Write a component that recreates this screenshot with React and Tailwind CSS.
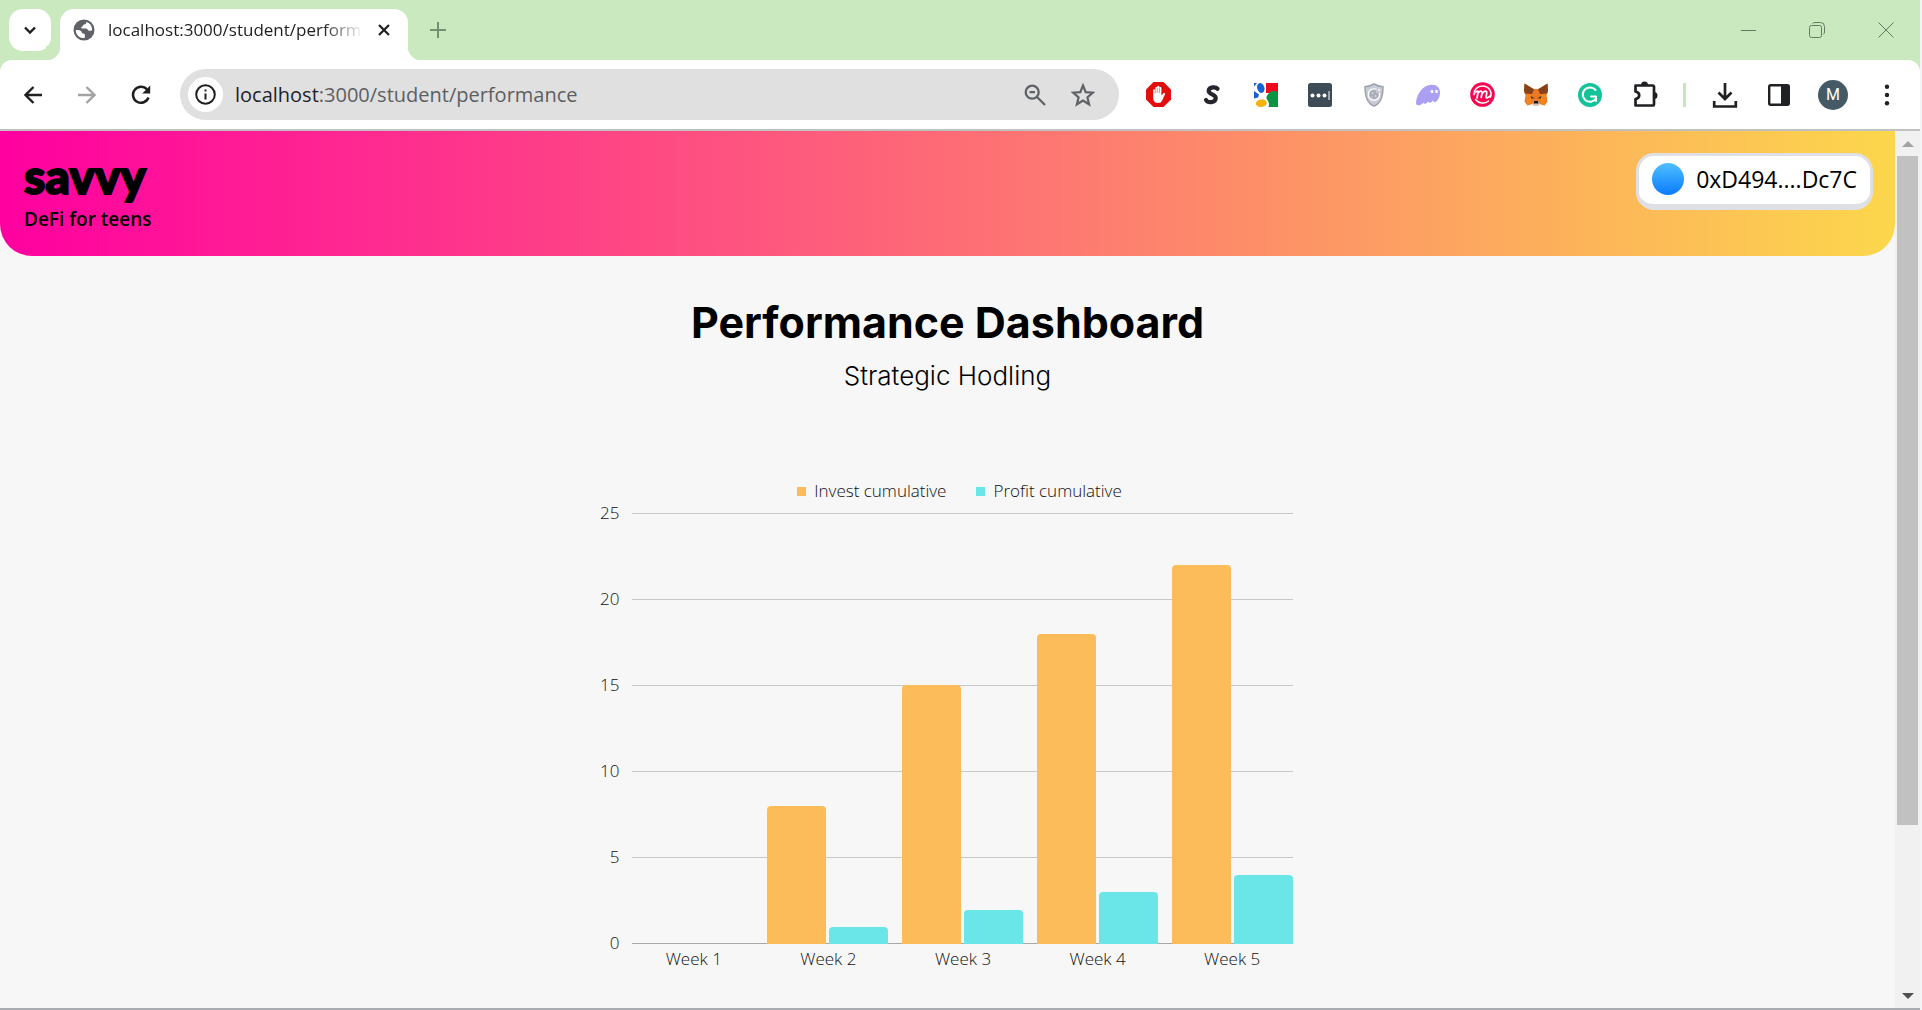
import React from "react";

const weeks = [
  { label: "Week 1", invest: 0, profit: 0 },
  { label: "Week 2", invest: 8, profit: 1 },
  { label: "Week 3", invest: 15, profit: 2 },
  { label: "Week 4", invest: 18, profit: 3 },
  { label: "Week 5", invest: 22, profit: 4 },
];
const MAX = 25;
const ticks = [25, 20, 15, 10, 5, 0];

function Svg({ size = 24, box = 24, children, className = "" }) {
  return (
    <svg width={size} height={size} viewBox={`0 0 ${box} ${box}`} fill="none" className={className} aria-hidden="true">
      {children}
    </svg>
  );
}

function ToolButton({ label, children }) {
  return (
    <button type="button" aria-label={label} className="flex h-10 w-[54px] shrink-0 items-center justify-center">
      {children}
    </button>
  );
}

function TabStrip() {
  return (
    <div className="flex h-[60px] items-end bg-[#cae9be]">
      <div className="flex h-[51px] shrink-0 items-start pl-[9px]">
        <button type="button" aria-label="Search tabs" className="flex size-[42px] items-center justify-center rounded-[14px] bg-white">
          <Svg size={14} box={14}>
            <path d="M2 4.5l5 5 5-5" stroke="#1f1f1f" strokeWidth="2.4" />
          </Svg>
        </button>
      </div>
      <div className="relative ml-[9px] flex h-[51px] w-[348px] shrink-0 items-center rounded-t-[14px] bg-white pb-[9px] pl-[13px] pr-2">
        <div className="absolute -left-[14px] bottom-0 size-[14px] bg-[radial-gradient(circle_at_0_0,#cae9be_14px,#ffffff_15px)]" />
        <div className="absolute -right-[14px] bottom-0 size-[14px] bg-[radial-gradient(circle_at_100%_0,#cae9be_14px,#ffffff_15px)]" />
        <Svg size={22} box={22} className="shrink-0">
          <circle cx="11" cy="11" r="10.5" fill="#5f6368" />
          <path d="M2.8 11c2.6.1 4.2.2 5.4 1.2 1 .9.5 2.1 1.900 2.200 1.300.1 1.900.5 1.800 1.700l-.2 2.900C6.800 19.600 2.700 15.900 2.800 11z" fill="#fff" />
          <path d="M13.200 3c.3 1.500-.6 2.400-2 2.500-1.500.1-.9 1.900-2.300 2.200-1.200.3-.9 1.700.3 1.700h3.900c1.500 0 1.500 2.200 3 2.400 1 .1 1.900.1 2.900-.3C19.500 7 16.700 3.800 13.200 3z" fill="#fff" />
        </Svg>
        <span className="ml-[13px] min-w-0 flex-1 whitespace-nowrap text-[17px] leading-6 text-[#1f1f1f] [mask-image:linear-gradient(to_right,#000_215px,transparent_255px)]">
          localhost:3000/student/perform
        </span>
        <button type="button" aria-label="Close tab" className="flex size-8 shrink-0 items-center justify-center">
          <Svg size={14} box={14}>
            <path d="M2 2l10 10M12 2L2 12" stroke="#1f1f1f" strokeWidth="2.2" />
          </Svg>
        </button>
      </div>
      <button type="button" aria-label="New tab" className="mb-[9px] ml-[9px] flex size-[42px] shrink-0 items-center justify-center">
        <Svg size={16} box={16}>
          <path d="M8 0v16M0 8h16" stroke="#759070" strokeWidth="2" />
        </Svg>
      </button>
      <div className="ml-auto flex h-full shrink-0">
        <button type="button" aria-label="Minimize" className="flex w-[69px] items-center justify-center">
          <Svg size={16} box={16}>
            <path d="M0 8.500h15" stroke="#667a60" />
          </Svg>
        </button>
        <button type="button" aria-label="Restore" className="flex w-[68px] items-center justify-center">
          <Svg size={16} box={16}>
            <rect x=".5" y="3.500" width="12" height="12" rx="2" stroke="#667a60" />
            <path d="M3.500 1.500Q4.500.5 6 .5h5.500a4 4 0 0 1 4 4V10q0 1.500-1.500 2.500" stroke="#667a60" />
          </Svg>
        </button>
        <button type="button" aria-label="Close window" className="flex w-[69px] items-center justify-center">
          <Svg size={16} box={16}>
            <path d="M.5.5l15 15M15.500.5l-15 15" stroke="#667a60" />
          </Svg>
        </button>
      </div>
    </div>
  );
}

function Extensions() {
  return (
    <>
      <ToolButton label="AdBlock">
        <Svg size={25} box={25}>
          <path d="M7.500 0h10L25 7.500v10L17.500 25h-10L0 17.500v-10z" fill="#e40d0d" />
          <path d="M7.200 12.500V8.200a1 1 0 0 1 2 0V6a1 1 0 0 1 2 0V4.800a1.100 1.100 0 0 1 2.200 0V6a1 1 0 0 1 2 0v7.500l1.800-2c.8-.9 2.200-.3 1.700.9l-2.700 6.100c-.8 1.700-2 2.500-4 2.500-3.200 0-5-1.800-5-4.700z" fill="#fff" />
          <path d="M9.200 7.500v4M11.200 6v5M13.400 6v5" stroke="#e40d0d" strokeWidth=".5" />
        </Svg>
      </ToolButton>
      <ToolButton label="Scribe">
        <Svg size={22} box={22}>
          <path d="M16.500 4.800C15 2.700 8.300 2.400 7.700 6.500c-.6 4.300 7.700 3.300 7 8-.6 4.200-7.500 5-9.700 1.500" stroke="#25262d" strokeWidth="4.200" strokeLinecap="round" />
        </Svg>
      </ToolButton>
      <ToolButton label="Google Search">
        <Svg size={24} box={24}>
          <path d="M12 0h12v10H12z" fill="#ee0a1c" />
          <path d="M0 0h3L0 3.500z" fill="#1a5fd0" />
          <path d="M0 8l5 3.500L4 14.500l-4 1z" fill="#1a5fd0" />
          <ellipse cx="6.800" cy="5" rx="3.600" ry="5" transform="rotate(-18 6.800 5)" fill="#1365d6" />
          <path d="M24 9.500V24h-9.500c1-3 .5-5-1.500-7.500-1.500-2 0-4 2-6.500C18 7 22 7.500 24 9.500z" fill="#0a9444" />
          <ellipse cx="7.300" cy="20.200" rx="5.500" ry="3.800" transform="rotate(-6 7.300 20.200)" fill="#f4b40c" />
        </Svg>
      </ToolButton>
      <ToolButton label="Password manager">
        <Svg size={24} box={24}>
          <rect width="24" height="24" rx="2.500" fill="#3d4c56" />
          <circle cx="4.500" cy="12.500" r="2" fill="#fff" />
          <circle cx="10.500" cy="12.500" r="2" fill="#fff" />
          <circle cx="16.500" cy="12.500" r="2" fill="#fff" />
          <path d="M21 8v9" stroke="#fff" />
        </Svg>
      </ToolButton>
      <ToolButton label="Privacy shield">
        <Svg size={24} box={24}>
          <path d="M12 .8c3 2 5.500 2.600 9 2.800 0 9-1.500 16-9 19.600C4.500 19.600 3 12.600 3 3.600 6.500 3.400 9 2.800 12 .8z" fill="#c8ccd5" stroke="#9a9fab" strokeWidth="1.400" />
          <circle cx="12" cy="11.500" r="5.600" fill="#a9aebb" stroke="#fff" strokeWidth="1.400" />
          <circle cx="10.500" cy="10" r=".8" fill="#e8eaf0" />
          <circle cx="13.500" cy="13" r=".8" fill="#e8eaf0" />
          <circle cx="10" cy="14" r=".6" fill="#e8eaf0" />
          <circle cx="16" cy="8" r="2.200" fill="#c8ccd5" />
          <circle cx="17" cy="7" r="1" fill="#fff" />
        </Svg>
      </ToolButton>
      <ToolButton label="Phantom">
        <Svg size={26} box={26}>
          <path d="M1 21c0-6 5-17.500 15-18.300 6-.4 9 3 9 7.800 0 4-2 8-4 9.300-1.500.9-2.600 0-2.900-1.500-1.400 2.300-3.700 3.500-4.900 1.300-2.300 3-4.400 2.600-5 .8C6.600 23.600 1 24.600 1 21z" fill="#ab9ff2" />
          <ellipse cx="17" cy="9.500" rx="1.400" ry="1.800" fill="#fff" />
          <ellipse cx="21.500" cy="9.500" rx="1.400" ry="1.800" fill="#fff" />
        </Svg>
      </ToolButton>
      <ToolButton label="Mintme">
        <Svg size={25} box={25}>
          <circle cx="12.500" cy="12.500" r="12.300" fill="#f8064f" />
          <path d="M20.500 15c2-5.500-2-11-8-11-5 0-9 4-8.500 8.700M5.500 17.500c3 4 9 4.800 13 1.500" stroke="#fff" strokeWidth="1.500" strokeLinecap="round" />
          <path d="M5.500 10.500c1.500-2 3-2 2.500 0L7 16M8 11.500c1.500-3.200 4.500-3.200 4 0l-.8 4M12.500 11.500c1.500-3.200 4.800-3.200 4.200 0-.4 2.500-1.500 4.500.3 4.300 1.500-.3 2.500-1 3.500-2.300" stroke="#fff" strokeWidth="1.700" strokeLinecap="round" />
        </Svg>
      </ToolButton>
      <ToolButton label="MetaMask">
        <Svg size={26} box={26}>
          <path d="M1.500 1.500L11 7h4l9.500-5.500L25 10l-1.500 3.500 1 6-3 4-5-1.500L15 24h-4l-1.500-2-5 1.500-3-4 1-6L1 10z" fill="#ec7a25" />
          <path d="M1.500 1.500L11 7.500 9 12l-6.500-.5L1 9zM24.500 1.500L15 7.500l2 4.500 6.500-.5L25 9z" fill="#83421c" />
          <path d="M3 13l5.500-1 .5 9-4.500 2.500zM23 13l-5.500-1-.5 9 4.500 2.500z" fill="#f5841f" />
          <path d="M7.500 14l4 2-3 .8zM18.500 14l-4 2 3 .8z" fill="#45301f" />
          <path d="M10 19.500h6l.5 3L15 24h-4l-1.500-1.500z" fill="#d8c5b7" />
          <path d="M11 19h4l.5 2.500h-5z" fill="#17181a" />
        </Svg>
      </ToolButton>
      <ToolButton label="Grammarly">
        <Svg size={24} box={24}>
          <circle cx="12" cy="12" r="12" fill="#15c39a" />
          <path d="M17.500 7A7.200 7.200 0 1 0 18 15.500" stroke="#fff" strokeWidth="2" strokeLinecap="round" />
          <path d="M13 13.500h5V18" stroke="#fff" strokeWidth="2" strokeLinecap="round" strokeLinejoin="round" />
        </Svg>
      </ToolButton>
      <ToolButton label="Extensions">
        <Svg size={28} box={28}>
          <path d="M5.500 4.500h17A1.500 1.500 0 0 1 24 6v17a1.500 1.500 0 0 1-1.500 1.500h-17V18c5-1 5-6.500 0-7.500z" stroke="#202124" strokeWidth="2.700" strokeLinejoin="round" />
          <path d="M11 4a3.500 3.500 0 0 1 7 0zM24 11a3.500 3.500 0 0 1 0 7z" fill="#202124" />
        </Svg>
      </ToolButton>
    </>
  );
}

function Toolbar() {
  return (
    <div className="bg-[#cae9be]">
      <div className="flex h-[69px] items-center rounded-t-[12px] bg-white pr-[6px]">
        <div className="flex shrink-0 pl-[6px]">
          <ToolButton label="Back">
            <Svg size={18} box={18}>
              <path d="M18 9H2M9.500 1L1.500 9l8 8" stroke="#1f1f1f" strokeWidth="2.400" />
            </Svg>
          </ToolButton>
          <ToolButton label="Forward">
            <Svg size={18} box={18}>
              <path d="M0 9h16M8.500 1l8 8-8 8" stroke="#a2a2a2" strokeWidth="2.400" />
            </Svg>
          </ToolButton>
          <ToolButton label="Reload">
            <Svg size={20} box={20}>
              <path d="M17.500 12.500A8 8 0 1 1 16 4.500l2 2.200" stroke="#1f1f1f" strokeWidth="2.500" />
              <path d="M19.200.5v8h-8l3.400-3.300z" fill="#1f1f1f" />
            </Svg>
          </ToolButton>
        </div>
        <div className="ml-3 flex h-[51px] min-w-0 flex-1 items-center rounded-full bg-[#e0e0e0] pl-2 pr-3">
          <button type="button" aria-label="Site information" className="flex size-[35px] shrink-0 items-center justify-center rounded-full bg-white">
            <Svg size={21} box={21}>
              <circle cx="10.500" cy="10.500" r="9.300" stroke="#1f1f1f" strokeWidth="2" />
              <path d="M10.500 9.500v6M10.500 5.500v2" stroke="#1f1f1f" strokeWidth="2" />
            </Svg>
          </button>
          <a href="#performance" className="ml-3 min-w-0 flex-1 truncate text-[20px] leading-7 text-[#5c5f62]">
            <span className="text-[#1f1f2b]">localhost</span>:3000/student/performance
          </a>
          <button type="button" aria-label="Zoom" className="flex h-10 w-12 shrink-0 items-center justify-center">
            <Svg size={22} box={22}>
              <circle cx="8.200" cy="8.200" r="6.500" stroke="#5f6368" strokeWidth="2.300" />
              <path d="M13 13l8 8M5.500 8.200h5.500" stroke="#5f6368" strokeWidth="2.300" />
            </Svg>
          </button>
          <button type="button" aria-label="Bookmark this page" className="flex h-10 w-12 shrink-0 items-center justify-center">
            <Svg size={24} box={24}>
              <path d="M12 2.500l2.700 6.600 7.100.6-5.400 4.600 1.700 7L12 17.500l-6.100 3.800 1.700-7-5.400-4.600 7.100-.6z" stroke="#5f6368" strokeWidth="2.200" />
            </Svg>
          </button>
        </div>
        <div className="ml-3 flex shrink-0 items-center">
          <Extensions />
          <div className="mx-3 h-6 w-[3px] bg-[#c5e5ba]" />
          <ToolButton label="Downloads">
            <Svg size={26} box={26}>
              <path d="M13 1v15M6.500 10.500l6.500 6.500 6.500-6.500M2.200 19v5.500h21.600V19" stroke="#202124" strokeWidth="2.700" />
            </Svg>
          </ToolButton>
          <ToolButton label="Side panel">
            <Svg size={22} box={22}>
              <rect x="1.200" y="1.200" width="19.600" height="19.600" rx="1.500" stroke="#202124" strokeWidth="2.400" />
              <path d="M13 1h8v20h-8z" fill="#202124" />
            </Svg>
          </ToolButton>
          <ToolButton label="Profile M">
            <span className="flex size-[30px] items-center justify-center rounded-full bg-[#455a64] font-[Roboto] text-[16px] text-white">M</span>
          </ToolButton>
          <ToolButton label="Menu">
            <Svg size={22} box={22}>
              <circle cx="11" cy="2.700" r="2.200" fill="#202124" />
              <circle cx="11" cy="11" r="2.200" fill="#202124" />
              <circle cx="11" cy="19.300" r="2.200" fill="#202124" />
            </Svg>
          </ToolButton>
        </div>
      </div>
      <div className="h-[2px] bg-[#c1c1c1]" />
    </div>
  );
}

function SiteHeader() {
  return (
    <header className="flex items-start justify-between rounded-b-[32px] bg-[linear-gradient(to_right,#ff00a0,#fcd74c)] pb-[23px] pl-6 pr-[22px] pt-[22px]">
      <div className="flex flex-col text-black">
        <span className="font-[Lato,sans-serif] text-[48px] font-black leading-[46px] [-webkit-text-stroke:2px_black]">savvy</span>
        <span className="pt-[6px] text-[19px] font-semibold leading-7">DeFi for teens</span>
      </div>
      <button type="button" className="flex items-center gap-3 rounded-[18px] border-[3px] border-b-[6px] border-[#dfe0e6] bg-white px-[13px] pb-[9px] pt-[7px] text-[23px] leading-8 text-black">
        <span className="size-8 rounded-full bg-[linear-gradient(to_bottom,#4fbfff,#0a7bff)]" />
        <span>0xD494....Dc7C</span>
      </button>
    </header>
  );
}

function Legend({ color, children }) {
  return (
    <div className="flex items-center gap-2">
      <span className={`size-[9px] ${color}`} />
      <span>{children}</span>
    </div>
  );
}

function Chart() {
  return (
    <figure className="mx-auto w-full max-w-[698px] pr-1 text-[17px] font-light leading-6 text-[#111]">
      <figcaption className="flex justify-center gap-[30px] pl-7">
        <Legend color="bg-[#fdbc5a]">Invest cumulative</Legend>
        <Legend color="bg-[#6ae6e8]">Profit cumulative</Legend>
      </figcaption>
      <div className="mt-[10px] flex gap-3">
        <div className="-my-3 flex h-[454px] w-[21px] flex-col justify-between text-right">
          {ticks.map((t) => (
            <span key={t}>{t}</span>
          ))}
        </div>
        <div className="grid h-[431px] flex-1">
          <div className="flex flex-col justify-between [grid-area:1/1]">
            {ticks.map((t) => (
              <div key={t} className={t === 0 ? "h-px bg-[#a8a8a8]" : "h-px bg-[#c8c8c8]"} />
            ))}
          </div>
          <div className="grid grid-cols-5 gap-[14px] [grid-area:1/1]">
            {weeks.map((w) => (
              <div key={w.label} className="flex h-full items-end gap-[3px]">
                <div className="flex-1 rounded-t-[4px] bg-[#fdbc5a]" style={{ height: `${(w.invest / MAX) * 100}%` }} />
                <div className="flex-1 rounded-t-[4px] bg-[#6ae6e8]" style={{ height: `${(w.profit / MAX) * 100}%` }} />
              </div>
            ))}
          </div>
        </div>
      </div>
      <div className="mt-[3px] grid grid-cols-5 gap-[14px] pl-[35px] text-center">
        {weeks.map((w) => (
          <span key={w.label}>{w.label}</span>
        ))}
      </div>
    </figure>
  );
}

function Scrollbar() {
  return (
    <div className="flex w-[25px] shrink-0 flex-col items-center bg-[#f1f1f1]" aria-hidden="true">
      <div className="flex h-[25px] items-center">
        <Svg size={12} box={12}>
          <path d="M6 3l6 6H0z" fill="#a3a3a3" />
        </Svg>
      </div>
      <div className="h-[669px] w-[21px] bg-[#c1c1c1]" />
      <div className="mt-auto flex h-[25px] items-center">
        <Svg size={12} box={12}>
          <path d="M6 9l6-6H0z" fill="#505050" />
        </Svg>
      </div>
    </div>
  );
}

export default function App() {
  return (
    <div className="flex min-h-screen flex-col border-r-2 border-[#f3f4f6] bg-white font-['Open_Sans',sans-serif]">
      <TabStrip />
      <Toolbar />
      <div className="flex flex-1 border-b-2 border-[#a9adb1]">
        <div className="min-w-0 flex-1 bg-[#f7f7f7]">
          <SiteHeader />
          <main className="pt-[41px]">
            <h1 className="text-center font-[Inter,sans-serif] text-[43px] font-bold leading-[50px] text-black">Performance Dashboard</h1>
            <p className="mt-[13px] text-center font-[Inter,sans-serif] text-[26px] font-light leading-8 text-black">Strategic Hodling</p>
            <div className="mt-[87px]">
              <Chart />
            </div>
          </main>
        </div>
        <Scrollbar />
      </div>
    </div>
  );
}
